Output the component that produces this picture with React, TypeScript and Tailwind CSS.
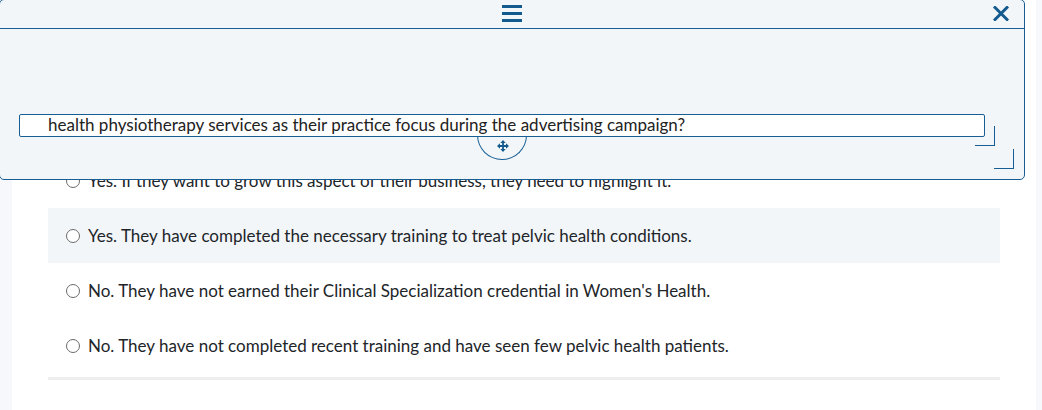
import React from "react";

const options = [
  "Yes. If they want to grow this aspect of their business, they need to highlight it.",
  "Yes. They have completed the necessary training to treat pelvic health conditions.",
  "No. They have not earned their Clinical Specialization credential in Women's Health.",
  "No. They have not completed recent training and have seen few pelvic health patients.",
];

function Radio() {
  return <span className="mr-[8px] inline-block h-[14px] w-[14px] shrink-0 rounded-full border border-[#6b6b6b] bg-white" />;
}

export default function App() {
  return (
    <div
      className="relative flex h-[410px] w-[1042px] overflow-hidden bg-[#f7f8fc] text-[#212529]"
      style={{ fontFamily: "Lato, 'Noto Sans', sans-serif" }}
    >
      <div className="ml-[12px] h-full w-[1024px] bg-white pl-[36px] pt-[153px]">
        <div className="w-[952px]">
          {options.map((o, i) => (
            <div
              key={i}
              className={`flex h-[55px] items-center px-[18px] text-[17px] ${i === 1 ? "bg-[#f3f6f9]" : ""}`}
            >
              <Radio />
              <span>{o}</span>
            </div>
          ))}
          <div className="mt-[4px] h-[3px] w-full bg-[#eeeeee]" />
        </div>
      </div>

      {/* floating panel */}
      <div className="absolute left-[-1px] top-[-1px] h-[181px] w-[1026px] rounded-[5px] border border-[#165e94] bg-[#f2f6f9]">
        <div className="grid h-[29px] grid-cols-[1fr_auto_1fr] border-b border-[#165e94]">
          <div />
          <div className="flex flex-col gap-[4px] pt-[5px]">
            <span className="block h-[3px] w-[20px] bg-[#135a8e]" />
            <span className="block h-[3px] w-[20px] bg-[#135a8e]" />
            <span className="block h-[3px] w-[20px] bg-[#135a8e]" />
          </div>
          <div className="flex justify-end pr-[15px] pt-[6px]">
            <svg width="16" height="15" viewBox="0 0 16 15">
              <path d="M2 1.5 L14 13.5 M14 1.5 L2 13.5" stroke="#135a8e" strokeWidth="3" strokeLinecap="square" />
            </svg>
          </div>
        </div>
        <div className="relative ml-[19px] mt-[85px] h-[23px] w-[966px]">
          <div className="absolute left-1/2 top-[21px] h-[25px] w-[50px] -translate-x-1/2 rounded-b-full border border-t-0 border-[#165e94]">
            <svg className="absolute left-[19px] top-[5px]" width="12" height="12" viewBox="0 0 12 12">
              <path d="M6 2.5 V9.5 M2.5 6 H9.5" stroke="#135a8e" strokeWidth="1.8" />
              <path d="M6 0 L3.3 3 H8.7 Z M6 12 L3.3 9 H8.7 Z M0 6 L3 3.3 V8.7 Z M12 6 L9 3.3 V8.7 Z" fill="#135a8e" />
            </svg>
          </div>
          <div className="relative flex h-[23px] items-center rounded-[2px] border border-[#165e94] bg-white pb-[2px] pl-[28px] text-[17px] leading-none text-[#222]">
            health physiotherapy services as their practice focus during the advertising campaign?
          </div>
        </div>
        <div className="absolute left-[975px] top-[126px] h-[20px] w-[20px] border-b border-r border-[#165e94]" />
        <div className="absolute left-[994px] top-[149px] h-[20px] w-[20px] border-b border-r border-[#165e94]" />
      </div>
    </div>
  );
}
